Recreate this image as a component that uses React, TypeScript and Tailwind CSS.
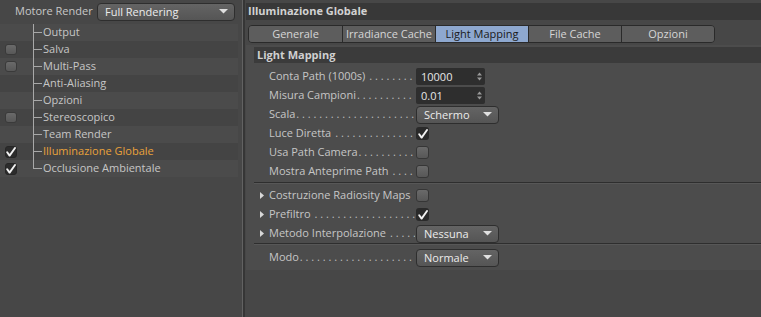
import React from "react";

const font = "font-['Open_Sans','Noto_Sans',sans-serif]";

function LeftCheck({ checked }: { checked?: boolean }) {
  if (checked) {
    return (
      <div className="w-[12px] h-[12px] rounded-[3px] bg-[#2c2c2c] border border-[#262626] flex items-center justify-center">
        <CheckMark />
      </div>
    );
  }
  return (
    <div className="w-[12px] h-[11px] rounded-[3px] bg-gradient-to-b from-[#6a6a6a] to-[#585858] border border-[#3a3a3a]" />
  );
}

function CheckMark() {
  return (
    <svg width="10" height="10" viewBox="0 0 10 10">
      <path d="M1.2 5.2 L3.6 8.6 L9 1" fill="none" stroke="#f2f2f2" strokeWidth="1.9" strokeLinecap="round" strokeLinejoin="round" />
    </svg>
  );
}

function Arrow() {
  return (
    <svg width="9" height="5" viewBox="0 0 9 5">
      <path d="M0 0 L9 0 L4.5 4.5 Z" fill="#e0e0e0" />
    </svg>
  );
}

function Dropdown({ text, w }: { text: string; w: string }) {
  return (
    <div
      className={`${w} h-[18px] rounded-[4px] border border-[#2e2e2e] bg-gradient-to-b from-[#646464] to-[#555555] flex items-center pl-[7px] pr-[6px] text-[#ececec]`}
    >
      <span className="flex-1 leading-none whitespace-nowrap">{text}</span>
      <Arrow />
    </div>
  );
}

function NumField({ value }: { value: string }) {
  return (
    <div className="w-[69px] h-[17px] rounded-[2px] bg-[#2e2e2e] flex items-center pl-[5px] pr-[3px] text-[#e6e6e6]">
      <span className="flex-1 leading-none">{value}</span>
      <svg width="5" height="9" viewBox="0 0 5 9">
        <path d="M0 3.5 L2.5 0.5 L5 3.5 Z" fill="#9a9a9a" />
        <path d="M0 5.5 L2.5 8.5 L5 5.5 Z" fill="#9a9a9a" />
      </svg>
    </div>
  );
}

function Box({ checked }: { checked?: boolean }) {
  if (checked) {
    return (
      <div className="w-[13px] h-[13px] rounded-[3px] bg-[#2a2a2a] flex items-center justify-center">
        <CheckMark />
      </div>
    );
  }
  return (
    <div className="w-[13px] h-[13px] rounded-[3px] bg-gradient-to-b from-[#6a6a6a] to-[#575757] border border-[#363636]" />
  );
}

const DOTS = ". . . . . . . . . . . . . . . . . . . . . . . . . . . . . . . . . . . . . . . . . . .";

function FormRow({
  label,
  control,
  tri,
  dots = true,
  gap,
}: {
  label: string;
  control: React.ReactNode;
  tri?: boolean;
  dots?: boolean;
  gap?: boolean;
}) {
  return (
    <div className="h-[19px] flex items-center">
      <div className="w-[15px] flex justify-end pr-[5px]">
        {tri && (
          <svg width="4" height="7" viewBox="0 0 4 7">
            <path d="M0 0 L4 3.5 L0 7 Z" fill="#d8d8d8" />
          </svg>
        )}
      </div>
      <div className="w-[146px] flex items-center overflow-hidden whitespace-nowrap text-[#c6c6c6]">
        <span className="shrink-0">{label}</span>
        {dots && (
          <span className={`flex-1 min-w-0 overflow-hidden text-[#bdbdbd] ${gap ? "pl-[4px]" : "pl-[1px]"}`}>{DOTS}</span>
        )}
      </div>
      <div className="ml-[1px]">{control}</div>
    </div>
  );
}

const leftItems = [
  { t: "Output" },
  { t: "Salva", c: "off" },
  { t: "Multi-Pass", c: "off" },
  { t: "Anti-Aliasing" },
  { t: "Opzioni" },
  { t: "Stereoscopico", c: "off" },
  { t: "Team Render" },
  { t: "Illuminazione Globale", c: "on", hl: true },
  { t: "Occlusione Ambientale", c: "on" },
];

const tabs = ["Generale", "Irradiance Cache", "Light Mapping", "File Cache", "Opzioni"];

export default function App() {
  return (
    <div className={`w-[761px] h-[317px] flex bg-[#474747] text-[11px] ${font} overflow-hidden`}>
      {/* Left panel */}
      <div className="w-[242px] flex flex-col">
        <div className="h-[22px] flex items-center pt-[1px]">
          <span className="pl-[15px] w-[97px] text-[#c8c8c8] whitespace-nowrap">Motore Render</span>
          <Dropdown text="Full Rendering" w="w-[138px]" />
        </div>
        <div className="mt-[2px] mr-[4px] relative">
          <div className="absolute left-[33px] top-0 h-[145px] w-[1px] bg-[#a8a8a8]" />
          {leftItems.map((it, i) => (
            <div
              key={it.t}
              className={`h-[17px] flex items-center ${i % 2 === 0 ? "bg-[#4b4b4b]" : "bg-[#444444]"}`}
            >
              <div className="w-[33px] pl-[5px] flex items-center">
                {it.c === "off" && <LeftCheck />}
                {it.c === "on" && <LeftCheck checked />}
              </div>
              <div className="w-[9px] h-[1px] bg-[#a8a8a8]" />
              <span className={`pl-[1px] ${it.hl ? "text-[#e9a23b]" : "text-[#c6c6c6]"}`}>{it.t}</span>
            </div>
          ))}
        </div>
      </div>
      {/* Divider */}
      <div className="w-[1px] bg-[#626262]" />
      <div className="w-[2px] bg-[#363636]" />
      {/* Right panel */}
      <div className="flex-1 flex flex-col">
        <div className="mt-[3px] ml-[1px] h-[17px] bg-[#383838] flex items-center pl-[2px] font-bold text-[#d2d2d2]">
          Illuminazione Globale
        </div>
        <div className="mt-[5px] ml-[3px] flex">
          <div className="flex h-[18px] border border-[#2a2a2a] rounded-[4px] overflow-hidden">
            {tabs.map((t, i) => (
              <div
                key={t}
                className={`w-[93px] flex items-center justify-center whitespace-nowrap ${
                  i > 0 ? "border-l border-[#2a2a2a]" : ""
                } ${t === "Light Mapping" ? "bg-[#8ea8cf] text-[#1a1a1a]" : "bg-[#5d5d5d] text-[#d6d6d6]"}`}
              >
                {t}
              </div>
            ))}
          </div>
        </div>
        <div className="mt-[2px] ml-[1px] h-[225px] bg-[#4c4c4c] flex flex-col pl-[8px]">
          <div className="mt-[2px] h-[16px] bg-[#3b3b3b] flex items-center pl-[3px] font-bold text-[#d0d0d0]">
            Light Mapping
          </div>
          <div className="mt-[4px]">
            <FormRow label="Conta Path (1000s)" control={<NumField value="10000" />} gap />
            <FormRow label="Misura Campioni" control={<NumField value="0.01" />} />
            <FormRow label="Scala" control={<Dropdown text="Schermo" w="w-[83px]" />} />
            <FormRow label="Luce Diretta" control={<Box checked />} gap />
            <FormRow label="Usa Path Camera" control={<Box />} />
            <FormRow label="Mostra Anteprime Path" control={<Box />} gap />
          </div>
          <div className="mt-[1px] h-[1px] bg-[#2e2e2e]" />
          <div className="h-[1px] bg-[#575757]" />
          <div className="mt-[2px]">
            <FormRow label="Costruzione Radiosity Maps" control={<Box />} tri dots={false} />
            <FormRow label="Prefiltro" control={<Box checked />} tri gap />
            <FormRow label="Metodo Interpolazione" control={<Dropdown text="Nessuna" w="w-[83px]" />} tri gap />
          </div>
          <div className="h-[1px] bg-[#2e2e2e]" />
          <div className="h-[1px] bg-[#575757]" />
          <div className="mt-[3px]">
            <FormRow label="Modo" control={<Dropdown text="Normale" w="w-[83px]" />} />
          </div>
        </div>
      </div>
    </div>
  );
}
